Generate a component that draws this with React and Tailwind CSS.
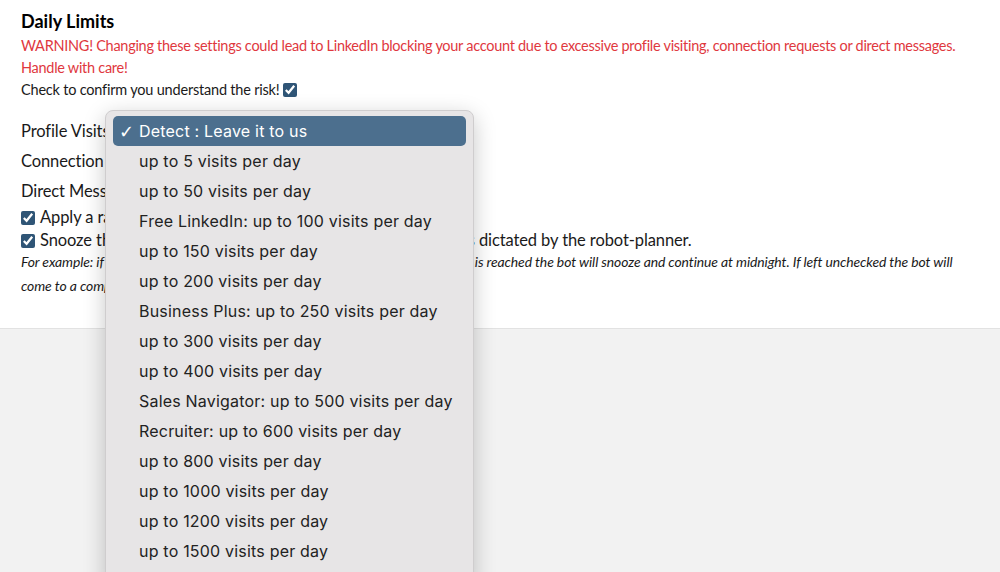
import React from 'react';

const OPTIONS = [
  'Detect : Leave it to us',
  'up to 5 visits per day',
  'up to 50 visits per day',
  'Free LinkedIn: up to 100 visits per day',
  'up to 150 visits per day',
  'up to 200 visits per day',
  'Business Plus: up to 250 visits per day',
  'up to 300 visits per day',
  'up to 400 visits per day',
  'Sales Navigator: up to 500 visits per day',
  'Recruiter: up to 600 visits per day',
  'up to 800 visits per day',
  'up to 1000 visits per day',
  'up to 1200 visits per day',
  'up to 1500 visits per day',
];

function Check() {
  return (
    <input
      type="checkbox"
      defaultChecked
      className="w-[14px] h-[14px] accent-[#2f5576] align-middle shrink-0"
    />
  );
}

export default function App() {
  return (
    <div className="relative w-[1000px] h-[572px] overflow-hidden bg-[#f2f2f2] font-['Lato',sans-serif] text-[#1a1a1a]">
      {/* Settings panel */}
      <div className="bg-white border-b border-[#e2e2e2] h-[329px] px-[21px] pt-[8px]">
        <h2 className="text-[18px] font-bold leading-[26px] text-black">Daily Limits</h2>
        <p className="text-[14.5px] leading-[22px] tracking-[-0.28px] text-[#e0383e] mt-[1px] whitespace-nowrap">
          WARNING! Changing these settings could lead to LinkedIn blocking your account due to excessive profile visiting, connection requests or direct messages.
          <br />
          Handle with care!
        </p>
        <div className="flex items-center gap-[4px] text-[14.5px] leading-[22px] tracking-[-0.2px]">
          Check to confirm you understand the risk! <Check />
        </div>

        <div className="mt-[15px] flex flex-col text-[16.5px] tracking-[-0.1px]">
          <div className="h-[30px] flex items-center">Profile Visits</div>
          <div className="h-[30px] flex items-center">Connection Requests</div>
          <div className="h-[30px] flex items-center">Direct Messages</div>
          <div className="h-[23px] flex items-center gap-[5px]">
            <Check /> Apply a random delay between actions
          </div>
          <div className="h-[23px] flex items-center gap-[5px] whitespace-nowrap">
            <Check /> Snooze the bot when the daily limits are reached, continue as dictated by the robot-planner.
          </div>
          <p className="italic text-[13.95px] leading-[24px] -mt-[2px] whitespace-nowrap tracking-[-0.1px]">
            For example: if the daily limit of 100 profile visits per day as set for your account is reached the bot will snooze and continue at midnight. If left unchecked the bot will
            <br />
            come to a complete stop.
          </p>
        </div>
      </div>

      {/* Open select menu */}
      <div className="absolute left-[105px] top-[110px] w-[369px] h-[480px] bg-[#e7e5e6] border border-[#cfcdce] rounded-[8px] shadow-[0_6px_22px_rgba(0,0,0,0.22)] px-[7px] pt-[5px] font-['Inter',sans-serif] text-[16px] tracking-[0.2px] text-[#222]">
        {OPTIONS.map((opt, i) => (
          <div
            key={opt}
            className={`h-[30px] flex items-center rounded-[5px] ${
              i === 0 ? 'bg-[#4c6f8e] text-white' : ''
            }`}
          >
            <span className="w-[26px] pl-[6px] text-[18px] font-['DejaVu_Sans',sans-serif]">{i === 0 ? '✓' : ''}</span>
            <span>{opt}</span>
          </div>
        ))}
      </div>
    </div>
  );
}
